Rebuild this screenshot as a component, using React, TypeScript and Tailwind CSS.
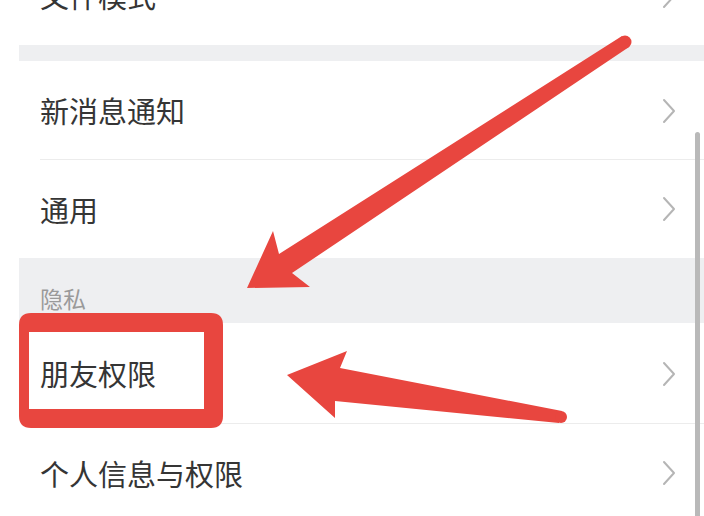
import { ChevronRight } from 'lucide-react';

const FONT = { fontFamily: '"Noto Sans CJK SC", "Noto Sans", sans-serif' };

// 설정 항목 한 줄
function Row({ label, divider = false, className = '' }: { label: string; divider?: boolean; className?: string }) {
  return (
    <div className={`relative flex items-center justify-between bg-white pl-[21px] pr-[28px] ${className}`}>
      <span className="text-[29px] leading-none text-[#353535]">{label}</span>
      <svg width="14" height="26" viewBox="0 0 14 26" className="text-[#b5b5b5]">
        <path d="M2 2 L12 13 L2 24" fill="none" stroke="currentColor" strokeWidth="2" strokeLinecap="round" strokeLinejoin="round" />
      </svg>
      {divider && <div className="absolute bottom-0 left-[21px] right-0 h-px bg-[#ececec]" />}
    </div>
  );
}

export default function App() {
  return (
    <div className="relative w-[704px] h-[516px] overflow-hidden bg-white" style={FONT}>
      <div className="ml-[19px] flex flex-col">
        <Row label="文件模式" className="-mt-[54px] h-[99px]" />
        <div className="h-[16px] bg-[#eeeff1]" />
        <Row label="新消息通知" divider className="h-[99px]" />
        <Row label="通用" className="h-[98px]" />
        <div className="h-[65px] bg-[#eeeff1] pl-[21px] pt-[29px]">
          <span className="text-[23px] leading-none text-[#9a9a9a]">隐私</span>
        </div>
        <Row label="朋友权限" divider className="h-[101px]" />
        <Row label="个人信息与权限" className="h-[98px]" />
      </div>

      {/* 스크롤바 */}
      <div className="absolute left-[695px] top-[132px] h-[400px] w-[5px] rounded-full bg-[#b9b9b9]" />

      {/* 빨간 표시 */}
      <svg className="absolute inset-0 pointer-events-none" width="704" height="516" viewBox="0 0 704 516">
        <path
          fillRule="evenodd"
          fill="#e8463f"
          d="M31 313 H211 Q223 313 223 325 V416 Q223 428 211 428 H31 Q19 428 19 416 V325 Q19 313 31 313 Z M29 332 V409 H204 V332 Z"
        />
        <polygon fill="#e8463f" points="622,36 279,254 273,231 247,288 310,287 292,273 629,47" />
        <circle cx="625" cy="42" r="6.5" fill="#e8463f" />
        <polygon fill="#e8463f" points="287,375 347,351 340,368 562,411 559,423 335,401 335,418" />
        <circle cx="561" cy="417" r="6" fill="#e8463f" />
      </svg>
    </div>
  );
}
